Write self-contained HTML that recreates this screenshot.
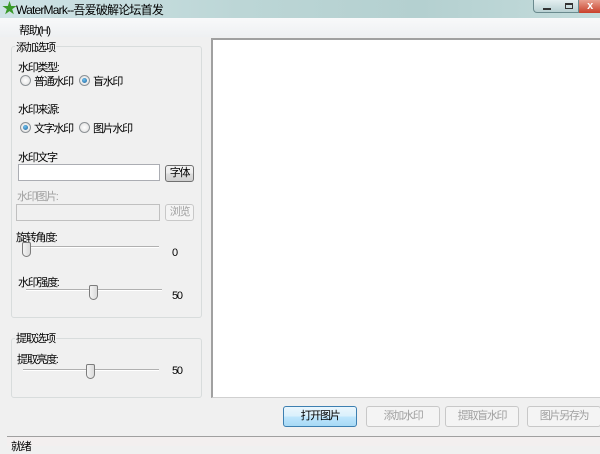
<!DOCTYPE html>
<html><head><meta charset="utf-8"><style>
*{margin:0;padding:0;box-sizing:border-box}
body{width:600px;height:446px;overflow:hidden;background:#f0f0f0;font-family:"Liberation Sans","Noto Sans CJK SC",sans-serif;font-size:11px;letter-spacing:-1.3px;color:#000;position:relative}
.a{position:absolute;white-space:nowrap}
.title{left:0;top:0;width:600px;height:18px;background:linear-gradient(90deg,#cfe3e6,#bcd6d6 40%,#b4d0d0 70%,#c4dcdc);}
.menu{left:0;top:18px;width:600px;height:19px;background:linear-gradient(#f8f9fa,#eef0f2)}
.grp{border:1px solid #d8dcdc;border-radius:3px;background:#f0f0f0}
.lab{background:#f0f0f0;padding:0 1px}
.radio{width:11px;height:11px;border-radius:50%;border:1px solid #8d9296;background:radial-gradient(#fff,#dcdcdc)}
.radio.on::after{content:"";position:absolute;left:2px;top:2px;width:5px;height:5px;border-radius:50%;background:radial-gradient(circle at 40% 35%,#6fc2f0,#1c5f98)}
.edit{background:#fff;border:1px solid #abadb3}
.btn{border:1px solid #707070;border-radius:3px;background:linear-gradient(#f2f2f2,#ebebeb 50%,#dddddd 51%,#cfcfcf);text-align:center}
.dis{border:1px solid #c8c8c8;border-radius:3px;background:#f4f4f4;color:#a0a0a0;text-align:center}
.track{height:2px;border-top:1px solid #b0b0b0;border-bottom:1px solid #fff}
.thumb{width:9px;height:15px;border:1px solid #7c7c7c;border-radius:2px 2px 5px 5px;background:linear-gradient(90deg,#f4f4f4,#dadada)}
</style></head><body>
<div class="a title"></div>
<div class="a" style="left:2px;top:1px;font-size:15px;color:#3a9a2a;line-height:16px">★</div>
<div class="a" style="left:16px;top:3px;font-size:12px;line-height:14px;letter-spacing:-0.8px">WaterMark--吾爱破解论坛首发</div>
<div class="a" style="left:533px;top:0;width:27px;height:13px;border:1px solid #6a8a8e;border-top:0;border-radius:0 0 0 4px;background:linear-gradient(#e4eff0,#b8d0d2)"><div style="position:absolute;left:9px;top:8px;width:8px;height:2px;background:#333"></div></div>
<div class="a" style="left:559px;top:0;width:20px;height:13px;border:1px solid #6a8a8e;border-top:0;border-left:0;background:linear-gradient(#e4eff0,#b8d0d2)"><div style="position:absolute;left:6px;top:3px;width:8px;height:6px;border:1px solid #333;border-top-width:2px"></div></div>
<div class="a" style="left:579px;top:0;width:21px;height:13px;background:linear-gradient(#e8a090,#c8402a);color:#fff;font-weight:bold;font-size:11px;text-align:center;line-height:12px">x</div>
<div class="a menu"></div>
<div class="a" style="left:19px;top:22px">帮助(H)</div>

<div class="a grp" style="left:11px;top:46px;width:191px;height:272px"></div>
<div class="a lab" style="left:15px;top:39px">添加选项</div>
<div class="a" style="left:18px;top:59px">水印类型:</div>
<div class="a radio" style="left:20px;top:75px"></div><div class="a" style="left:34px;top:73px">普通水印</div>
<div class="a radio on" style="left:79px;top:75px"></div><div class="a" style="left:93px;top:73px">盲水印</div>
<div class="a" style="left:18px;top:101px">水印来源:</div>
<div class="a radio on" style="left:20px;top:122px"></div><div class="a" style="left:34px;top:120px">文字水印</div>
<div class="a radio" style="left:79px;top:122px"></div><div class="a" style="left:93px;top:120px">图片水印</div>
<div class="a" style="left:18px;top:149px">水印文字</div>
<div class="a edit" style="left:18px;top:164px;width:142px;height:17px"></div>
<div class="a btn" style="left:165px;top:165px;width:29px;height:17px;line-height:15px">字体</div>
<div class="a" style="left:17px;top:188px;color:#a0a0a0">水印图片:</div>
<div class="a" style="left:16px;top:204px;width:144px;height:17px;border:1px solid #c0c0c0;background:#f0f0f0"></div>
<div class="a dis" style="left:165px;top:204px;width:29px;height:17px;line-height:15px">浏览</div>
<div class="a" style="left:16px;top:229px">旋转角度:</div>
<div class="a track" style="left:24px;top:246px;width:135px"></div>
<div class="a thumb" style="left:22px;top:242px"></div>
<div class="a" style="left:172px;top:247px">0</div>
<div class="a" style="left:18px;top:274px">水印强度:</div>
<div class="a track" style="left:26px;top:289px;width:136px"></div>
<div class="a thumb" style="left:89px;top:285px"></div>
<div class="a" style="left:172px;top:290px">50</div>

<div class="a grp" style="left:11px;top:338px;width:191px;height:60px"></div>
<div class="a lab" style="left:15px;top:330px">提取选项</div>
<div class="a" style="left:17px;top:351px">提取亮度:</div>
<div class="a track" style="left:23px;top:369px;width:136px"></div>
<div class="a thumb" style="left:86px;top:364px"></div>
<div class="a" style="left:172px;top:365px">50</div>

<div class="a" style="left:211px;top:38px;width:389px;height:360px;background:#fff;border-left:2px solid #a0a0a0;border-top:2px solid #a0a0a0;border-bottom:1px solid #d0d0d0"></div>

<div class="a btn" style="left:283px;top:406px;width:74px;height:21px;line-height:19px;border-color:#3c7fb1;background:linear-gradient(#eaf6fd,#d9f0fc 50%,#bee6fd 51%,#a7d9f5)">打开图片</div>
<div class="a dis" style="left:366px;top:406px;width:74px;height:21px;line-height:19px">添加水印</div>
<div class="a dis" style="left:445px;top:406px;width:74px;height:21px;line-height:19px">提取盲水印</div>
<div class="a dis" style="left:527px;top:406px;width:74px;height:21px;line-height:19px">图片另存为</div>

<div class="a" style="left:7px;top:436px;width:593px;height:10px;border-top:1px solid #a0a0a0;background:#f3efef"></div>
<div class="a" style="left:11px;top:438px;font-size:11px">就绪</div>
</body></html>
